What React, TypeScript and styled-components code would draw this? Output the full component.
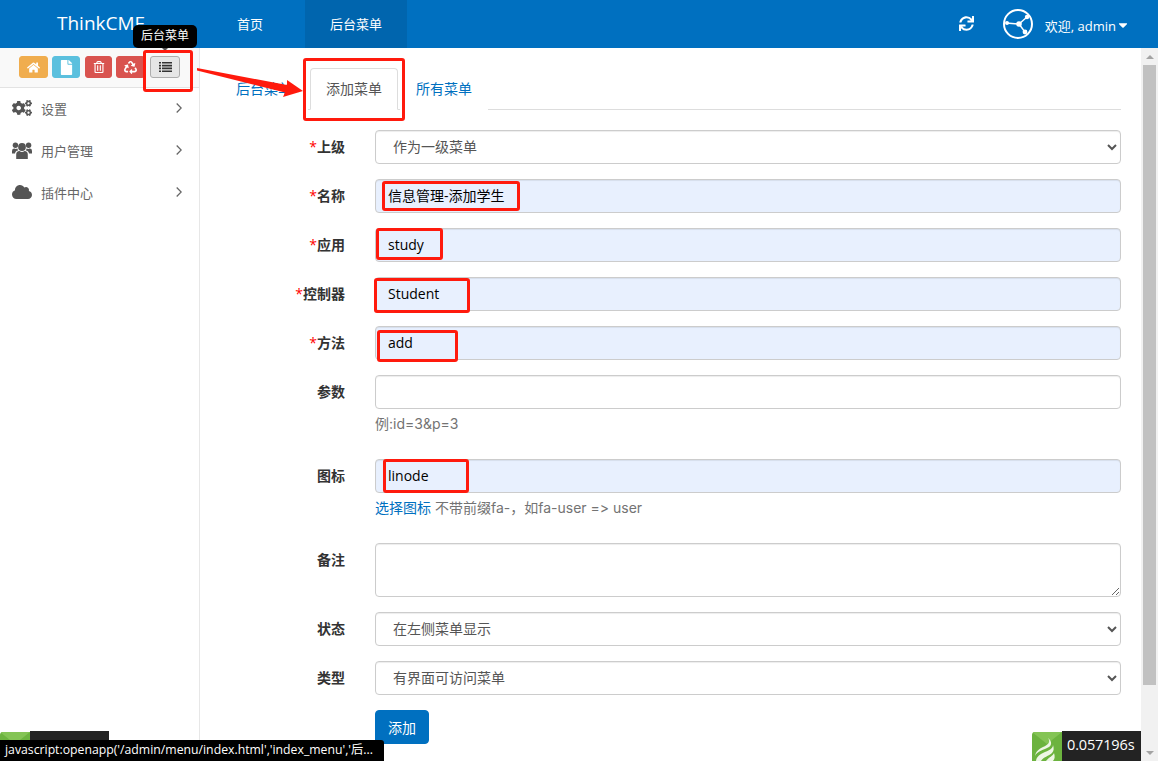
import React from "react";
import styled, { createGlobalStyle } from "styled-components";
import { FaHome, FaFile, FaRegTrashAlt, FaRecycle, FaCogs, FaCloud, FaSync, FaCaretDown } from "react-icons/fa";

const FONT = `"Open Sans", "Noto Sans CJK SC", "Liberation Sans", sans-serif`;

const Global = createGlobalStyle`
  html, body { margin: 0; padding: 0; height: 100%; overflow: hidden; background: #fff; }
  body { font-family: ${FONT}; font-size: 14px; color: #333; }
  * { box-sizing: border-box; }
`;

const Page = styled.div`
  position: relative;
  width: 1158px;
  height: 761px;
  display: flex;
  flex-direction: column;
  overflow: hidden;
`;

const Header = styled.header`
  height: 48px;
  flex: none;
  display: flex;
  align-items: stretch;
  background: #0070c0;
  color: #fff;
  font-size: 13px;
`;

const Brand = styled.div`
  width: 212px;
  padding-left: 57px;
  font-size: 19px;
  line-height: 47px;
`;

const NavItem = styled.div<{ $active?: boolean; $gap?: number }>`
  padding: 0 25px;
  line-height: 48px;
  margin-right: ${(p) => p.$gap ?? 0}px;
  background: ${(p) => (p.$active ? "#0065ae" : "transparent")};
`;

const HeaderRight = styled.div`
  margin-left: auto;
  display: flex;
  align-items: center;
  padding-right: 28px;
`;

const Refresh = styled.span`
  display: flex;
  font-size: 15px;
  margin-right: 29px;
  margin-bottom: 1px;
`;

const Welcome = styled.span`
  display: flex;
  align-items: center;
  margin: 2px 0 0 12px;
  font-size: 13px;
`;

const Body = styled.div`
  flex: 1;
  min-height: 0;
  display: flex;
`;

const Sidebar = styled.aside`
  width: 200px;
  flex: none;
  border-right: 1px solid #e7e7e7;
  background: #fff;
`;

const Shortcuts = styled.div`
  height: 40px;
  padding: 8px 0 0 19px;
  display: flex;
  align-items: flex-start;
  background: #f9f9f9;
  border-bottom: 1px solid #e3e3e3;
`;

const ShortcutButton = styled.button<{ $bg: string; $w: number; $gap: number; $plain?: boolean; $icon?: number }>`
  width: ${(p) => p.$w}px;
  height: 22px;
  margin: 0 ${(p) => p.$gap}px 0 0;
  padding: 0;
  display: flex;
  align-items: center;
  justify-content: center;
  border-radius: 3px;
  border: 1px solid ${(p) => (p.$plain ? "#adadad" : p.$bg)};
  background: ${(p) => p.$bg};
  color: ${(p) => (p.$plain ? "#333" : "#fff")};
  font-size: ${(p) => p.$icon ?? 14}px;
`;

const ListGlyph = styled.svg`
  width: 13px;
  height: 10px;
  fill: #333;
`;

const MenuItem = styled.div`
  height: 42px;
  display: flex;
  align-items: center;
  padding: 0 17px 2px 12px;
  color: #666;
  font-size: 13px;
`;

const MenuIcon = styled.span`
  width: 29px;
  display: flex;
  font-size: 20px;
  color: #555;
`;

const UsersGlyph = styled.svg`
  width: 20px;
  height: 18px;
  fill: #555;
`;

const Chevron = styled.svg`
  margin-left: auto;
  width: 6px;
  height: 10px;
  fill: none;
  stroke: #666;
  stroke-width: 1.3;
`;

const Main = styled.main`
  flex: 1;
  min-width: 0;
  padding: 20px 20px 0;
`;

const Tabs = styled.div`
  display: flex;
  height: 42px;
  border-bottom: 1px solid #ddd;
  margin-bottom: 20px;
`;

const Tab = styled.div<{ $active?: boolean }>`
  width: 88px;
  height: 42px;
  margin-right: 2px;
  padding: 0 15px;
  line-height: 39px;
  white-space: nowrap;
  font-size: 14px;
  border: 1px solid ${(p) => (p.$active ? "#ddd" : "transparent")};
  border-bottom-color: ${(p) => (p.$active ? "#fff" : "transparent")};
  border-radius: 4px 4px 0 0;
  background: #fff;
  color: ${(p) => (p.$active ? "#555" : "#0070c0")};
`;

const Row = styled.div<{ $after?: number }>`
  display: flex;
  align-items: flex-start;
  margin-bottom: ${(p) => p.$after ?? 15}px;
`;

const Label = styled.label`
  width: 125px;
  margin-right: 30px;
  flex: none;
  text-align: right;
  font-weight: 700;
  line-height: 34px;
  color: #333;
`;

const Req = styled.span`
  color: #f00;
  font-weight: 400;
`;

const Field = styled.div`
  flex: 1;
  min-width: 0;
`;

const controlBase = `
  display: block;
  width: 100%;
  border: 1px solid #ccc;
  border-radius: 4px;
  font-family: ${FONT};
  font-size: 14px;
  box-shadow: inset 0 1px 1px rgba(0,0,0,.075);
  outline: none;
`;

const TextInput = styled.input<{ $filled?: boolean }>`
  ${controlBase}
  height: 34px;
  padding: 0 12px 2px 12px;
  color: #000;
  background: ${(p) => (p.$filled ? "#e8f0fe" : "#fff")};
`;

const Select = styled.select`
  ${controlBase}
  height: 34px;
  padding: 0 12px 2px 13px;
  color: #555;
  background: #fff;
`;

const TextArea = styled.textarea`
  ${controlBase}
  height: 54px;
  padding: 6px 12px;
  resize: vertical;
  background: #fff;
`;

const Help = styled.div`
  margin-top: 5px;
  line-height: 20px;
  color: #737373;
  font-family: Inter, "Noto Sans CJK SC", sans-serif;
  font-variant-ligatures: none;
  font-feature-settings: "calt" 0, "liga" 0;
  font-size: 14px;
  white-space: nowrap;
`;

const HelpLink = styled.span`
  color: #0070c0;
`;

const Submit = styled.button`
  width: 54px;
  height: 34px;
  padding: 0;
  border: 1px solid #0070c0;
  border-radius: 4px;
  background: #0070c0;
  color: #fff;
  font-family: ${FONT};
  font-size: 14px;
`;

const ScrollTrack = styled.div`
  width: 17px;
  flex: none;
  display: flex;
  flex-direction: column;
  background: #f1f1f1;
`;

const ScrollArrow = styled.div<{ $down?: boolean }>`
  height: 17px;
  flex: none;
  display: flex;
  align-items: center;
  justify-content: center;
  &::before {
    content: "";
    border-left: 4px solid transparent;
    border-right: 4px solid transparent;
    border-${(p) => (p.$down ? "top" : "bottom")}: 4px solid #a3a3a3;
  }
`;

const ScrollThumb = styled.div`
  height: 620px;
  margin: 0 0 0 2px;
  width: 13px;
  background: #c1c1c1;
`;

const ScrollGap = styled.div`
  flex: 1;
`;

const Tooltip = styled.div`
  position: absolute;
  left: 133px;
  top: 25px;
  width: 64px;
  height: 23px;
  border-radius: 5px;
  background: #000;
  color: #fff;
  font-size: 12px;
  line-height: 22px;
  text-align: center;
  &::after {
    content: "";
    position: absolute;
    left: 29px;
    top: 23px;
    border-left: 3px solid transparent;
    border-right: 3px solid transparent;
    border-top: 3px solid #555;
  }
`;

const Mark = styled.div<{ $x: number; $y: number; $w: number; $h: number }>`
  position: absolute;
  left: ${(p) => p.$x}px;
  top: ${(p) => p.$y}px;
  width: ${(p) => p.$w}px;
  height: ${(p) => p.$h}px;
  border: 3px solid #ff1a0d;
  border-radius: 3px;
  pointer-events: none;
`;

const ArrowMark = styled.svg`
  position: absolute;
  left: 190px;
  top: 60px;
  width: 120px;
  height: 45px;
`;

const TraceLeft = styled.div`
  position: absolute;
  left: 0;
  bottom: 0;
  height: 30px;
  width: 109px;
  display: flex;
`;

const TraceLeftLogo = styled.svg`
  width: 30px;
  height: 29px;
  margin-top: 1px;
  display: block;
  border-top-left-radius: 3px;
`;

const TraceDark = styled.div`
  flex: 1;
  background: #232323;
`;

const StatusBar = styled.div`
  position: absolute;
  left: 0;
  bottom: 0;
  width: 384px;
  height: 21px;
  padding-left: 5px;
  background: #000;
  border-top-right-radius: 3px;
  color: #fff;
  font-size: 12.25px;
  line-height: 20px;
  white-space: nowrap;
  overflow: hidden;
`;

const TraceRight = styled.div`
  position: absolute;
  left: 1032px;
  bottom: 0;
  height: 30px;
  display: flex;
  align-items: flex-end;
`;

const TraceLogo = styled.svg`
  width: 30px;
  height: 29px;
  display: block;
  border-top-left-radius: 3px;
`;

const TraceTime = styled.div`
  width: 79px;
  height: 30px;
  padding-left: 5px;
  background: #232323;
  color: #fff;
  font-size: 14.5px;
  letter-spacing: -0.15px;
  line-height: 28px;
  white-space: nowrap;
`;

const LogoSvg = styled.svg`
  width: 30px;
  height: 30px;
  display: block;
`;

const GreenTile = () => (
  <>
    <rect width="30" height="29" fill="#6cb33f" />
    <path d="M0 0 L15 12 L30 0 Z" fill="#84c455" />
  </>
);

const UsersIcon = () => (
  <UsersGlyph viewBox="0 0 20 18">
    <circle cx="3.4" cy="4.2" r="2.7" />
    <circle cx="16.6" cy="4.2" r="2.7" />
    <circle cx="10" cy="6" r="3.9" />
    <path d="M4.2 18 V13.5 Q4.2 10 7.5 10 Q10 12 12.5 10 Q15.8 10 15.8 13.5 V18 Z" />
    <path d="M0 12.5 V10 Q0 7.5 2.5 7.6 Q3.5 8.2 5.4 7.6 Q5.6 8.8 6.2 9.4 Q3.2 9.8 3 12.5 Z" />
    <path d="M20 12.5 V10 Q20 7.5 17.5 7.6 Q16.5 8.2 14.6 7.6 Q14.4 8.8 13.8 9.4 Q16.8 9.8 17 12.5 Z" />
  </UsersGlyph>
);

const MENU = [
  { icon: <FaCogs />, text: "设置" },
  { icon: <UsersIcon />, text: "用户管理" },
  { icon: <FaCloud />, text: "插件中心" },
];

const MARKS = [
  { x: 143, y: 50, w: 50, h: 42 },
  { x: 303, y: 58, w: 102, h: 63 },
  { x: 382, y: 181, w: 138, h: 30 },
  { x: 376, y: 228, w: 67, h: 32 },
  { x: 374, y: 278, w: 96, h: 35 },
  { x: 377, y: 330, w: 81, h: 32 },
  { x: 383, y: 459, w: 86, h: 34 },
];

const TextRow = ({ label, value }: { label: string; value: string }) => (
  <Row>
    <Label><Req>*</Req>{label}</Label>
    <Field><TextInput $filled defaultValue={value} /></Field>
  </Row>
);

export default function App() {
  return (
    <Page>
      <Global />
      <Header>
        <Brand>ThinkCMF</Brand>
        <NavItem $gap={17}>首页</NavItem>
        <NavItem $active>后台菜单</NavItem>
        <HeaderRight>
          <Refresh><FaSync /></Refresh>
          <LogoSvg viewBox="0 0 30 30">
            <circle cx="15" cy="15" r="14" fill="none" stroke="#fff" strokeWidth="2" />
            <path d="M3 14 L16 15 L24 8 M16 15 L22 23" stroke="#fff" strokeWidth="1.4" fill="none" />
            <circle cx="4" cy="14" r="2" fill="#fff" />
            <circle cx="16" cy="15" r="2.8" fill="#fff" />
            <circle cx="24" cy="8" r="2.2" fill="#fff" />
            <circle cx="22" cy="23" r="2.4" fill="#fff" />
          </LogoSvg>
          <Welcome>欢迎, admin <FaCaretDown size={14} /></Welcome>
        </HeaderRight>
      </Header>
      <Body>
        <Sidebar>
          <Shortcuts>
            <ShortcutButton $bg="#f0ad4e" $w={29} $gap={4} $icon={13}><FaHome /></ShortcutButton>
            <ShortcutButton $bg="#5bc0de" $w={28} $gap={5} $icon={15}><FaFile /></ShortcutButton>
            <ShortcutButton $bg="#d9534f" $w={27} $gap={4} $icon={12}><FaRegTrashAlt /></ShortcutButton>
            <ShortcutButton $bg="#d9534f" $w={29} $gap={5} $icon={13}><FaRecycle /></ShortcutButton>
            <ShortcutButton $bg="#e6e6e6" $w={30} $gap={0} $plain>
              <ListGlyph viewBox="0 0 13 10">
                <path d="M0 0h2v1.6H0zM3 0h10v1.6H3zM0 2.8h2v1.6H0zM3 2.8h10v1.6H3zM0 5.6h2v1.6H0zM3 5.6h10v1.6H3zM0 8.4h2V10H0zM3 8.4h10V10H3z" />
              </ListGlyph>
            </ShortcutButton>
          </Shortcuts>
          {MENU.map((m) => (
            <MenuItem key={m.text}>
              <MenuIcon>{m.icon}</MenuIcon>
              {m.text}
              <Chevron viewBox="0 0 6 10"><path d="M0.7 0.5 L5.2 5 L0.7 9.5" /></Chevron>
            </MenuItem>
          ))}
        </Sidebar>
        <Main>
          <Tabs>
            <Tab>后台菜单</Tab>
            <Tab $active>添加菜单</Tab>
            <Tab>所有菜单</Tab>
          </Tabs>
          <Row>
            <Label><Req>*</Req>上级</Label>
            <Field><Select><option>作为一级菜单</option></Select></Field>
          </Row>
          <TextRow label="名称" value="信息管理-添加学生" />
          <TextRow label="应用" value="study" />
          <TextRow label="控制器" value="Student" />
          <TextRow label="方法" value="add" />
          <Row $after={25}>
            <Label>参数</Label>
            <Field>
              <TextInput />
              <Help>例:id=3&amp;p=3</Help>
            </Field>
          </Row>
          <Row $after={25}>
            <Label>图标</Label>
            <Field>
              <TextInput $filled defaultValue="linode" />
              <Help><HelpLink>选择图标</HelpLink> 不带前缀fa-，如fa-user =&gt; user</Help>
            </Field>
          </Row>
          <Row>
            <Label>备注</Label>
            <Field><TextArea /></Field>
          </Row>
          <Row>
            <Label>状态</Label>
            <Field><Select><option>在左侧菜单显示</option></Select></Field>
          </Row>
          <Row>
            <Label>类型</Label>
            <Field><Select><option>有界面可访问菜单</option></Select></Field>
          </Row>
          <Row>
            <Label />
            <Submit>添加</Submit>
          </Row>
        </Main>
        <ScrollTrack>
          <ScrollArrow />
          <ScrollThumb />
          <ScrollGap />
          <ScrollArrow $down />
        </ScrollTrack>
      </Body>

      <Tooltip>后台菜单</Tooltip>
      {MARKS.map((m) => (
        <Mark key={`${m.x}-${m.y}`} $x={m.x} $y={m.y} $w={m.w} $h={m.h} />
      ))}
      <ArrowMark viewBox="190 60 120 45">
        <polygon points="197,68 287,85 287,80 303,91 283,97 285,92.5 197,70.5" fill="#ff1a0d" />
      </ArrowMark>

      <TraceLeft>
        <TraceLeftLogo viewBox="0 0 30 29"><GreenTile /></TraceLeftLogo>
        <TraceDark />
      </TraceLeft>
      <StatusBar>javascript:openapp('/admin/menu/index.html','index_menu','后...</StatusBar>
      <TraceRight>
        <TraceLogo viewBox="0 0 30 29">
          <GreenTile />
          <path d="M16 6 C19 10 16 13 11 15 C7 17 4 19 3 24 C5 19 12 18 17 15 C20 13 20 9 16 6Z" fill="#eef6e6" />
          <path d="M21 13 C21 18 14 19 9 22 C6 24 4 26 4 29 L9 29 C11 25 17 24 20 21 C22 19 22 16 21 13Z" fill="#eef6e6" />
          <path d="M22 21 C21 24 17 25 14 29 L21 29 C23 27 23 24 22 21Z" fill="#eef6e6" />
        </TraceLogo>
        <TraceTime>0.057196s</TraceTime>
      </TraceRight>
    </Page>
  );
}
